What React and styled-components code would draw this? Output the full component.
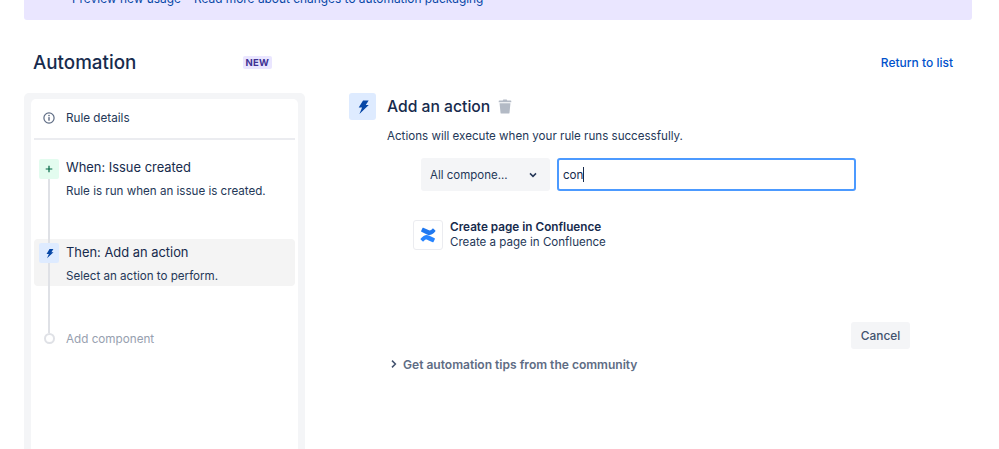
import React from "react";
import styled, { createGlobalStyle } from "styled-components";

const GlobalStyle = createGlobalStyle`
  html, body {
    margin: 0;
    padding: 0;
    background: #ffffff;
    height: 100%;
    overflow: hidden;
  }
  body {
    font-family: Inter, "Liberation Sans", sans-serif;
    color: #172b4d;
    -webkit-font-smoothing: antialiased;
  }
`;

const Bolt = ({ size, color }) => (
  <svg width={size} height={size} viewBox="0 0 16 16">
    <path d="M7.2 1.5h5.6L10.4 6h3L5 15l2-6.4H3.6z" fill={color} transform="skewX(-6) translate(1 0)" />
  </svg>
);

export default function App() {
  return (
    <Page>
      <GlobalStyle />
      <Banner>
        <BannerLink>Preview new usage</BannerLink>
        <BannerLink>Read more about changes to automation packaging</BannerLink>
      </Banner>
      <Header>
        <TitleGroup>
          <PageTitle>Automation</PageTitle>
          <NewBadge>NEW</NewBadge>
        </TitleGroup>
        <ReturnLink>Return to list</ReturnLink>
      </Header>
      <Body>
        <Sidebar>
          <SidebarCard>
            <DetailsRow>
              <svg width="12" height="12" viewBox="0 0 12 12">
                <circle cx="6" cy="6" r="5.1" fill="none" stroke="#5e6c84" strokeWidth="1.2" />
                <circle cx="6" cy="3.6" r="0.8" fill="#5e6c84" />
                <rect x="5.3" y="5.1" width="1.4" height="3.6" fill="#5e6c84" />
              </svg>
              <DetailsText>Rule details</DetailsText>
            </DetailsRow>
            <Timeline>
              <Step>
                <StepIcon $bg="#e3fcef">
                  <svg width="10" height="10" viewBox="0 0 10 10">
                    <path d="M5 1.700v6.600M1.700 5h6.600" stroke="#006644" strokeWidth="1.200" />
                  </svg>
                </StepIcon>
                <StepText>
                  <StepTitle>When: Issue created</StepTitle>
                  <StepDesc>Rule is run when an issue is created.</StepDesc>
                </StepText>
              </Step>
              <Step $active>
                <StepIcon $bg="#deebff">
                  <Bolt size={11} color="#0747a6" />
                </StepIcon>
                <StepText $active>
                  <StepTitle>Then: Add an action</StepTitle>
                  <StepDesc>Select an action to perform.</StepDesc>
                </StepText>
              </Step>
              <AddRow>
                <AddDotCell>
                  <AddDot />
                </AddDotCell>
                <AddText>Add component</AddText>
              </AddRow>
            </Timeline>
          </SidebarCard>
        </Sidebar>
        <Main>
          <ActionHeader>
            <ActionIcon>
              <Bolt size={16} color="#0747a6" />
            </ActionIcon>
            <ActionTitle>Add an action</ActionTitle>
            <TrashIcon width="14" height="15" viewBox="0 0 14 16">
              <path d="M4.600 1.600 5.200.6h3.600l.6 1H13a.7.7 0 0 1 .7.8v1H.3v-1a.7.7 0 0 1 .7-.8z" fill="#b3bac5" />
              <path d="M1.200 4.400h11.600l-1 10.200a1 1 0 0 1-1 .9H3.200a1 1 0 0 1-1-.9z" fill="#b3bac5" />
            </TrashIcon>
          </ActionHeader>
          <ActionDesc>Actions will execute when your rule runs successfully.</ActionDesc>
          <SearchRow>
            <SelectBox>
              <span>All compone...</span>
              <svg width="10" height="10" viewBox="0 0 10 10">
                <path d="M2 3.400 5 6.400l3-3" fill="none" stroke="#253858" strokeWidth="1.500" />
              </svg>
            </SelectBox>
            <SearchInput>
              con<Caret />
            </SearchInput>
          </SearchRow>
          <ResultRow>
            <ResultLogo>
              <svg width="16" height="16" viewBox="0 0 16 16">
                <path d="M.6 11.700c2.800-3.400 5.600-4.600 8.400-3.200l5.600 2.700c.3.1.4.4.3.7l-1.400 3c-.1.3-.5.4-.8.3L7.600 12.900c-1.500-.7-2.700-.3-4 1.400-.2.3-.6.3-.8.1L.7 12.500c-.2-.2-.3-.5-.1-.8z" fill="#2684ff" />
                <path d="M15.400 4.300C12.600 7.700 9.800 8.900 7 7.500L1.400 4.800c-.3-.1-.4-.4-.3-.7l1.400-3c.1-.3.5-.4.8-.3l5.100 2.300c1.500.7 2.700.3 4-1.400.2-.3.6-.3.8-.1l2.100 1.900c.2.2.3.5.1.8z" fill="#1f78f0" />
              </svg>
            </ResultLogo>
            <ResultText>
              <ResultTitle>Create page in Confluence</ResultTitle>
              <ResultDesc>Create a page in Confluence</ResultDesc>
            </ResultText>
          </ResultRow>
          <ActionsRow>
            <CancelButton>Cancel</CancelButton>
          </ActionsRow>
          <TipsRow>
            <svg width="8" height="10" viewBox="0 0 8 10">
              <path d="M2 1.600 5.400 5 2 8.400" fill="none" stroke="#42526e" strokeWidth="1.500" />
            </svg>
            <TipsText>Get automation tips from the community</TipsText>
          </TipsRow>
        </Main>
      </Body>
    </Page>
  );
}

const Page = styled.div`
  width: 999px;
  height: 449px;
  overflow: hidden;
  box-sizing: border-box;
  padding: 0 27px 0 24px;
`;
const Banner = styled.div`
  height: 20px;
  display: flex;
  align-items: flex-end;
  gap: 13px;
  padding: 0 0 14px 48px;
  box-sizing: border-box;
  background: #eae6ff;
  border-radius: 0 0 3px 3px;
`;
const BannerLink = styled.span`
  font-size: 11.9px;
  line-height: 15px;
  color: #0747a6;
  white-space: nowrap;
`;
const Header = styled.div`
  display: flex;
  justify-content: space-between;
  align-items: center;
  height: 30px;
  margin-top: 27px;
  padding: 0 19px 0 9px;
`;
const TitleGroup = styled.div`
  display: flex;
  align-items: center;
  width: 239px;
  justify-content: space-between;
`;
const PageTitle = styled.h1`
  margin: 0;
  padding-top: 2px;
  font-size: 18.8px;
  line-height: 30px;
  font-weight: 500;
  color: #172b4d;
`;
const NewBadge = styled.span`
  background: #eae6ff;
  color: #403294;
  font-size: 9.5px;
  line-height: 13px;
  font-weight: 700;
  letter-spacing: 0.2px;
  padding: 0 3px;
  border-radius: 2px;
`;
const ReturnLink = styled.a`
  font-size: 12px;
  font-weight: 500;
  color: #0052cc;
`;
const Body = styled.div`
  display: flex;
  margin-top: 16px;
`;
const Sidebar = styled.aside`
  width: 281px;
  height: 400px;
  flex-shrink: 0;
  padding: 6px 7px;
  box-sizing: border-box;
  background: #f4f5f7;
  border-radius: 5px;
`;
const SidebarCard = styled.div`
  height: 100%;
  padding: 0 3px;
  background: #ffffff;
  border-radius: 5px;
`;
const DetailsRow = styled.div`
  display: flex;
  align-items: center;
  gap: 11px;
  height: 41px;
  box-sizing: border-box;
  padding: 0 0 2px 9px;
  border-bottom: 2px solid #ebecf0;
`;
const DetailsText = styled.span`
  font-size: 11.7px;
  color: #253858;
`;
const Timeline = styled.div`
  position: relative;
  padding-top: 15px;
  &::before {
    content: "";
    position: absolute;
    left: 14px;
    top: 39px;
    height: 154px;
    width: 1.5px;
    background: #dfe1e6;
  }
`;
const Step = styled.div`
  display: flex;
  gap: 7px;
  height: 47px;
  padding: 4px 5px;
  box-sizing: border-box;
  margin-bottom: 37px;
  border-radius: 4px;
  background: ${(p) => (p.$active ? "#f4f4f4" : "transparent")};
`;
const StepIcon = styled.div`
  position: relative;
  width: 20px;
  height: 20px;
  flex-shrink: 0;
  display: flex;
  align-items: center;
  justify-content: center;
  border-radius: 2px;
  background: ${(p) => p.$bg};
`;
const StepText = styled.div`
  display: flex;
  flex-direction: column;
  margin-top: ${(p) => (p.$active ? "1px" : "0")};
`;
const StepTitle = styled.div`
  font-size: 12.9px;
  line-height: 18px;
  color: #172b4d;
`;
const StepDesc = styled.div`
  margin-top: 7px;
  font-size: 11.6px;
  line-height: 15px;
  color: #253858;
`;
const AddRow = styled.div`
  position: relative;
  display: flex;
  align-items: center;
  gap: 7px;
  padding-left: 5px;
  margin-top: 43px;
  height: 20px;
`;
const AddDotCell = styled.div`
  width: 20px;
  display: flex;
  justify-content: center;
`;
const AddDot = styled.div`
  width: 11px;
  height: 11px;
  margin-top: -1px;
  box-sizing: border-box;
  border: 2px solid #dfe1e6;
  border-radius: 50%;
  background: #ffffff;
`;
const AddText = styled.span`
  font-size: 11.7px;
  color: #97a0af;
`;
const Main = styled.main`
  flex: 1;
  padding: 0 0 0 44px;
`;
const ActionHeader = styled.div`
  display: flex;
  align-items: center;
  height: 27px;
`;
const ActionIcon = styled.div`
  width: 27px;
  height: 27px;
  display: flex;
  align-items: center;
  justify-content: center;
  background: #deebff;
  border-radius: 3px;
  margin-right: 11px;
`;
const ActionTitle = styled.h2`
  margin: 0 8px 0 0;
  font-size: 15.7px;
  font-weight: 500;
  color: #172b4d;
`;
const TrashIcon = styled.svg`
  margin-bottom: 1px;
`;
const ActionDesc = styled.p`
  margin: 8px 0 0 38px;
  font-size: 11.6px;
  line-height: 16px;
  color: #253858;
`;
const SearchRow = styled.div`
  display: flex;
  gap: 7px;
  margin: 14px 0 0 72px;
`;
const SelectBox = styled.div`
  width: 129px;
  height: 33px;
  box-sizing: border-box;
  padding: 0 12px 0 9px;
  display: flex;
  align-items: center;
  justify-content: space-between;
  background: #f4f5f7;
  border-radius: 3px;
  font-size: 11.5px;
  color: #253858;
`;
const SearchInput = styled.div`
  width: 299px;
  height: 33px;
  box-sizing: border-box;
  padding: 0 4px;
  display: flex;
  align-items: center;
  border: 2px solid #4c9aff;
  border-radius: 3px;
  font-size: 11.6px;
  color: #172b4d;
`;
const Caret = styled.span`
  width: 1px;
  height: 15px;
  background: #172b4d;
`;
const ResultRow = styled.div`
  display: flex;
  align-items: center;
  gap: 7px;
  margin: 28px 0 0 64px;
`;
const ResultLogo = styled.div`
  width: 30px;
  height: 30px;
  box-sizing: border-box;
  display: flex;
  align-items: center;
  justify-content: center;
  border: 1px solid #ebecf0;
  border-radius: 3px;
`;
const ResultText = styled.div`
  padding-top: 1px;
`;
const ResultTitle = styled.div`
  font-size: 11.75px;
  line-height: 15px;
  font-weight: 600;
  color: #172b4d;
`;
const ResultDesc = styled.div`
  font-size: 11.55px;
  line-height: 15px;
  color: #253858;
`;
const ActionsRow = styled.div`
  display: flex;
  justify-content: flex-end;
  padding-right: 62px;
  margin-top: 72px;
`;
const CancelButton = styled.button`
  width: 59px;
  height: 27px;
  padding: 0;
  border: 0;
  border-radius: 3px;
  background: #f4f5f7;
  font-family: inherit;
  font-size: 11.9px;
  font-weight: 500;
  color: #42526e;
`;
const TipsRow = styled.div`
  display: flex;
  align-items: center;
  gap: 5px;
  margin: 7px 0 0 41px;
  height: 16px;
`;
const TipsText = styled.span`
  font-size: 12.05px;
  font-weight: 600;
  color: #5e6c84;
`;
